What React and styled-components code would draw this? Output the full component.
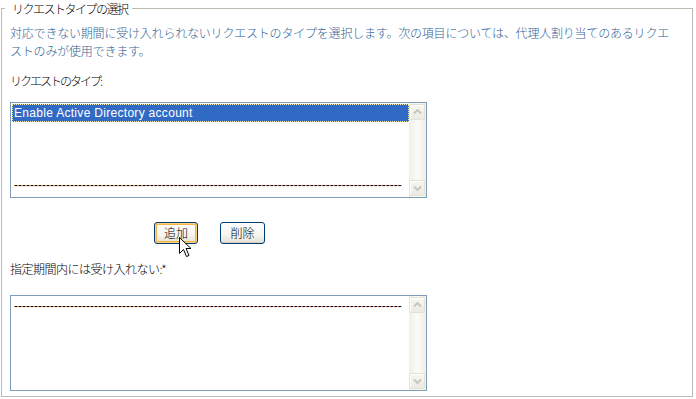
import React from "react";
import styled, { createGlobalStyle } from "styled-components";

const Global = createGlobalStyle`
  html, body { margin: 0; padding: 0; background: #fff; }
  body { font-family: "Noto Sans CJK JP", "Liberation Sans", sans-serif; font-size: 12px; color: #000; }
`;

const Fieldset = styled.fieldset`
  margin: 0 0 0 1px;
  width: 692px;
  box-sizing: border-box;
  border: 1px solid #bdbcb3;
  padding: 0 8px 5px 8px;
  min-width: 0;
`;

const Legend = styled.legend`
  font-size: 12px;
  font-weight: 300;
  line-height: 17px;
  height: 17px;
  padding: 0 4px 0 7px;
  margin-left: -5px;
  letter-spacing: -1.5px;
  color: #000;
`;

const Intro = styled.p`
  margin: 7px 0 0 0;
  width: 668px;
  font-size: 12px;
  font-weight: 300;
  line-height: 18px;
  letter-spacing: -0.2px;
  color: #2f6496;
`;

const Label = styled.div`
  margin-top: ${(p) => p.$mt}px;
  font-size: 12px;
  font-weight: 300;
  line-height: 18px;
  letter-spacing: ${(p) => p.$ls}px;
`;

const ListBox = styled.div`
  margin-top: ${(p) => p.$mt}px;
  width: 417px;
  height: 96px;
  box-sizing: border-box;
  border: 1px solid #7f9db9;
  background: #fff;
  display: flex;
`;

const Rows = styled.div`
  flex: 1;
  padding: 1px 0 1px 1px;
  display: flex;
  flex-direction: column;
`;

const Row = styled.div`
  height: 18px;
  flex: none;
  box-sizing: border-box;
  padding-left: 2px;
  font-family: "Liberation Sans", Arial, sans-serif;
  font-size: 12px;
  line-height: 18px;
  white-space: nowrap;
  overflow: hidden;
  letter-spacing: ${(p) => (p.$dash ? 0 : 0.3)}px;
  color: ${(p) => (p.$selected ? "#fff" : "#000")};
  background: ${(p) => (p.$selected ? "#316ac5" : "transparent")};
  outline: ${(p) => (p.$selected ? "1px dotted #f7eeb0" : "none")};
  outline-offset: -1px;
`;

const ScrollBar = styled.div`
  width: 17px;
  padding: 1px 1px 1px 0;
  box-sizing: border-box;
  display: flex;
  flex-direction: column;
  background: linear-gradient(to right, #f0efe8, #fbfbf8 50%, #eeede6);
`;

const ScrollBtn = styled.div`
  height: 16px;
  flex: none;
  box-sizing: border-box;
  border: 1px solid #e4e2d8;
  border-radius: 2px;
  background: linear-gradient(to bottom, #f7f6f1, #eceae1);
  display: flex;
  align-items: center;
  justify-content: center;
  box-shadow: inset 1px 1px 0 #fff;
`;

const Track = styled.div`
  flex: 1;
`;

const ButtonRow = styled.div`
  margin-top: 24px;
  padding-left: 144px;
  display: flex;
  gap: 22px;
`;

const ButtonWrap = styled.div`
  position: relative;
`;

const Button = styled.button`
  width: ${(p) => p.$w}px;
  height: 22px;
  padding: 0;
  box-sizing: border-box;
  font-family: "Noto Sans CJK JP", sans-serif;
  font-size: 12px;
  font-weight: 300;
  line-height: 18px;
  color: #000;
  border: 1px solid #003c74;
  border-radius: 3px;
  background: linear-gradient(to bottom, #ffffff, #f5f4ef 60%, #e3e0d4);
  box-shadow: ${(p) =>
    p.$focus
      ? "inset 0 0 0 1px #fcd27c, inset 0 0 0 2px #f5b544"
      : "inset 0 -1px 0 #d6d0c0, inset 0 1px 0 #fff"};
`;

const Cursor = styled.svg`
  position: absolute;
  left: 25px;
  top: 15px;
  pointer-events: none;
`;

const Arrow = ({ down }) => (
  <svg width="9" height="6" viewBox="0 0 9 6">
    <polyline
      points={down ? "1,1.5 4.5,5 8,1.5" : "1,4.5 4.5,1 8,4.5"}
      fill="none"
      stroke="#c8c6bb"
      strokeWidth="2"
    />
  </svg>
);

const Scroll = () => (
  <ScrollBar>
    <ScrollBtn>
      <Arrow />
    </ScrollBtn>
    <Track />
    <ScrollBtn>
      <Arrow down />
    </ScrollBtn>
  </ScrollBar>
);

const DASHES = "-".repeat(97);

export default function App() {
  return (
    <>
      <Global />
      <Fieldset>
        <Legend>リクエストタイプの選択</Legend>
        <Intro>
          対応できない期間に受け入れられないリクエストのタイプを選択します。次の項目については、代理人割り当てのあるリクエストのみが使用できます。
        </Intro>
        <Label $mt={12} $ls={-2}>リクエストのタイプ:</Label>
        <ListBox $mt={12}>
          <Rows>
            <Row $selected>Enable Active Directory account</Row>
            <Row />
            <Row />
            <Row />
            <Row $dash>{DASHES}</Row>
          </Rows>
          <Scroll />
        </ListBox>
        <ButtonRow>
          <ButtonWrap>
            <Button $w={44} $focus>追加</Button>
            <Cursor width="13" height="21" viewBox="0 0 13 21">
              <polygon
                points="0.5,0.5 0.5,16.5 4.5,12.5 7.5,19.5 10,18.5 7,11.5 12,11.5"
                fill="#fff"
                stroke="#000"
                strokeWidth="1"
              />
            </Cursor>
          </ButtonWrap>
          <Button $w={45}>削除</Button>
        </ButtonRow>
        <Label $mt={16} $ls={-0.5}>指定期間内には受け入れない:*</Label>
        <ListBox $mt={17}>
          <Rows>
            <Row $dash>{DASHES}</Row>
          </Rows>
          <Scroll />
        </ListBox>
      </Fieldset>
    </>
  );
}
